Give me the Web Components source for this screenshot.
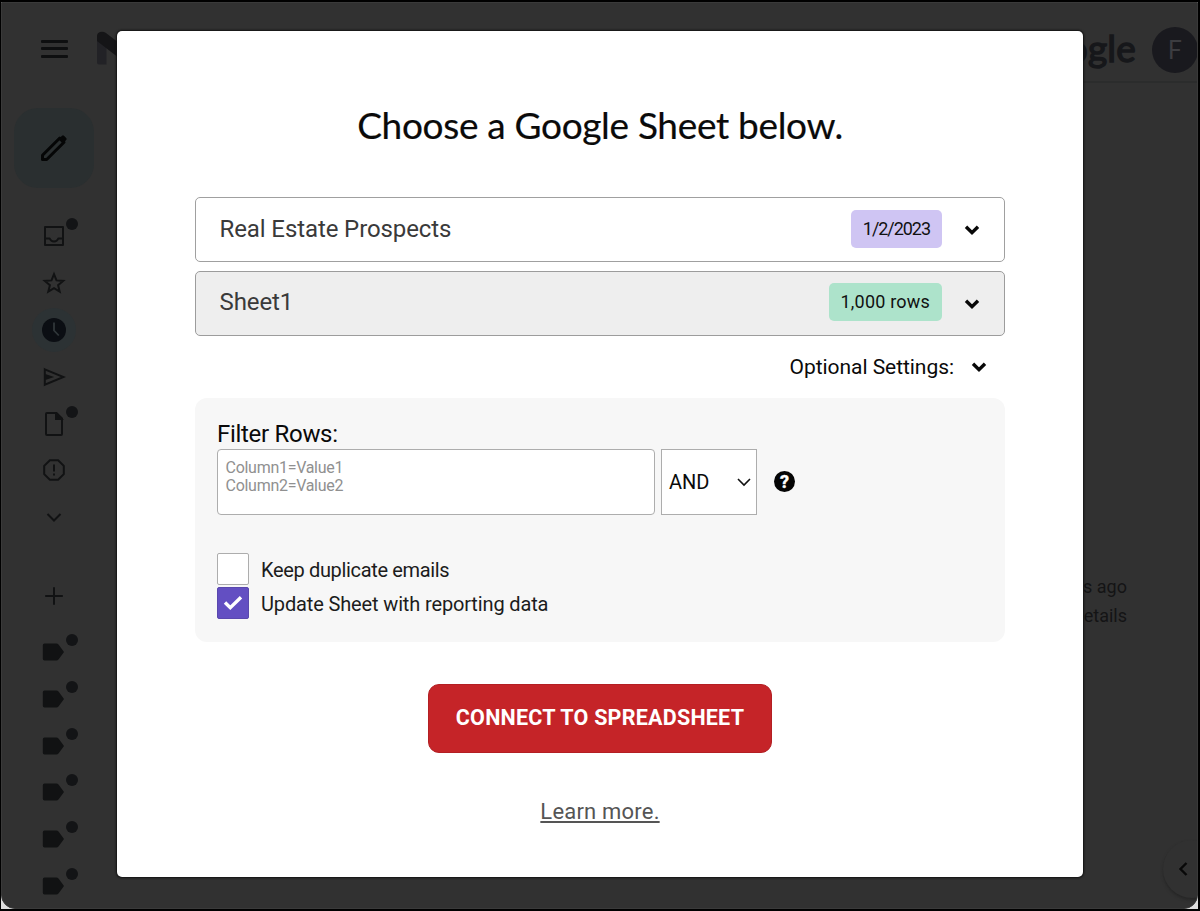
<!DOCTYPE html>
<html lang="en">
<head>
<meta charset="utf-8">
<title>Choose a Google Sheet</title>
<style>
  html, body {
    margin: 0;
    height: 100%;
    background: #000;
    overflow: hidden;
    font-family: Roboto, "Liberation Sans", sans-serif;
  }
</style>
</head>
<body>
<mail-window>
  <nav-rail slot="rail"></nav-rail>
  <mail-header slot="header" initial="F"></mail-header>
  <activity-note slot="note"></activity-note>
  <sheet-dialog slot="dialog">
    <span slot="title">Choose a Google Sheet below.</span>
    <picker-row label="Real Estate Prospects" badge="1/2/2023" style="--badge: #cfc5f3; --track: -1.050px"></picker-row>
    <picker-row label="Sheet1" badge="1,000 rows" lowered style="--badge: #ade3cb; --row: #eee; --edge: #9c9c9c"></picker-row>
    <options-toggle>Optional Settings:</options-toggle>
    <filter-panel>
      <check-option style="--track: -0.340px">Keep duplicate emails</check-option>
      <check-option checked style="--track: -0.140px">Update Sheet with reporting data</check-option>
    </filter-panel>
    <connect-button slot="actions">CONNECT TO SPREADSHEET</connect-button>
    <learn-link slot="actions">Learn more.</learn-link>
  </sheet-dialog>
</mail-window>

<script>
// Small base class: render() returns the shadow markup
class BaseElement extends HTMLElement {
  constructor() {
    super();
    this.attachShadow({ mode: 'open' });
  }

  connectedCallback() {
    this.shadowRoot.innerHTML = this.render();
  }
}

const ICONS = {
  inbox: `<path d="M3 3h18v18H3zM3.5 14.5h4.2c.8 2 2.200 3 4.300 3s3.500-1 4.300-3h4.200" stroke-linejoin="round"/>`,
  star: `<path d="M12 3.200l2.500 6.200 6.700.5-5.100 4.300 1.600 6.500-5.700-3.500-5.700 3.500 1.600-6.500-5.100-4.300 6.700-.5z"/>`,
  clock: `<circle cx="12" cy="12" r="12" fill="currentColor" stroke="none"/><path d="M12 4.500v8l4.800 5" stroke="#30373a" stroke-width="1.800"/>`,
  send: `<path d="M2.800 4.300L21.500 12 2.800 19.700zM3 12h6M3 10l6 2-6 2"/>`,
  file: `<path d="M5 1h9.500l5.500 5.500V22q0 1-1 1H5q-1 0-1-1V2q0-1 1-1z"/><path d="M14 1.500V7h5.500z" fill="currentColor"/>`,
  spam: `<path d="M7.900 2.200h8.200l5.700 5.700v8.200l-5.700 5.700H7.900l-5.700-5.700V7.900z"/><path d="M12 6.500v7M12 15.500v2"/>`,
  more: `<path d="M5.500 9l6.500 6.500L18.500 9"/>`,
  plus: `<path d="M12 3.200v17.600M3.200 12h17.600"/>`,
  label: `<path d="M2.500 3.500h11.800q1.500 0 2.400 1.200L22 12l-5.300 7.300q-.9 1.200-2.400 1.200H2.500q-1.700 0-1.700-1.700V5.200q0-1.700 1.700-1.700z" fill="currentColor" stroke="none"/>`
};

class RailItem extends BaseElement {
  render() {
    const icon = this.getAttribute('icon');
    return `
      <style>
        :host {
          display: flex;
          flex: none;
          height: 46.900px;
          align-items: center;
          justify-content: center;
          color: #111213;
        }
        .box {
          position: relative;
          display: flex;
          align-items: center;
          justify-content: center;
          width: 24px;
          height: 24px;
        }
        :host([active]) .box {
          color: #0b0e13;
          border-radius: 50%;
          box-shadow: 0 0 0 10px #2c3234;
          background: #2c3234;
        }
        svg { width: 24px; height: 24px; flex: none; }
        .dot {
          position: absolute;
          left: 23.500px;
          top: -6px;
          width: 12px;
          height: 12px;
          border-radius: 50%;
          background: #131416;
        }
      </style>
      <div class="box">
        <svg viewBox="0 0 24 24" fill="none" stroke="currentColor" stroke-width="2">${ICONS[icon]}</svg>
        ${this.hasAttribute('dot') ? '<span class="dot"></span>' : ''}
      </div>
    `;
  }
}

class NavRail extends BaseElement {
  render() {
    const labels = Array.from({ length: 6 }, () => '<rail-item icon="label" dot></rail-item>').join('');
    return `
      <style>
        :host {
          display: flex;
          flex-direction: column;
          width: 106px;
          margin-left: -1px;
        }
        .menu {
          display: flex;
          flex: none;
          flex-direction: column;
          justify-content: space-between;
          height: 17.500px;
          margin: 37px 39.500px 0;
          padding-bottom: 50.500px;
        }
        .menu i { height: 2.600px; border-radius: 1px; background: #0e0f10; }
        .compose {
          display: flex;
          flex: none;
          align-items: center;
          justify-content: center;
          width: 80px;
          height: 80px;
          margin: 0 13px;
          border-radius: 24px;
          background: #2a2f30;
        }
        .items { display: flex; flex: none; flex-direction: column; padding-top: 24.500px; }
        .gap { flex: none; height: 31.700px; }
        .gap.small { height: 9px; }
      </style>
      <div class="menu"><i></i><i></i><i></i></div>
      <div class="compose">
        <svg width="28" height="28" viewBox="0 0 28 28" fill="none" stroke="#050606">
          <path d="M2.500 25.500v-4.200L19.800 4l4.200 4.200L6.700 25.500z" stroke-width="3" stroke-linejoin="round"/>
          <path d="M18.500 5.300L22 1.800q1-1 2 0l2.200 2.200q1 1 0 2l-3.500 3.500z" fill="#050606" stroke="none"/>
        </svg>
      </div>
      <div class="items">
        <rail-item icon="inbox" dot></rail-item>
        <rail-item icon="star"></rail-item>
        <rail-item icon="clock" active></rail-item>
        <rail-item icon="send"></rail-item>
        <rail-item icon="file" dot></rail-item>
        <rail-item icon="spam"></rail-item>
        <rail-item icon="more"></rail-item>
        <div class="gap"></div>
        <rail-item icon="plus"></rail-item>
        <div class="gap small"></div>
        ${labels}
      </div>
    `;
  }
}

class MailHeader extends BaseElement {
  render() {
    return `
      <style>
        :host {
          display: flex;
          align-items: center;
          height: 94px;
          box-sizing: border-box;
        }
        .logo { flex: none; margin: -4px 0 0 1px; }
        .brand {
          margin: -4px 0 0 auto;
          font: 400 37px/46px Lato, sans-serif;
          letter-spacing: 0.200px;
          color: #16171a;
          -webkit-text-stroke: 1.400px #16171a;
        }
        .avatar {
          flex: none;
          width: 46px;
          height: 46px;
          margin: 0 -1px 0 16px;
          border-radius: 50%;
          background: #19191e;
          color: #3c3c40;
          font: 25px/48px Roboto, sans-serif;
          text-align: center;
        }
      </style>
      <svg class="logo" width="46" height="34" viewBox="0 0 46 34">
        <path d="M1 5h9.500v28.500H3q-2 0-2-2z" fill="#222226"/>
        <path d="M4 1q3-1 6 1l13 10L36 2q3-2 6-1t3 5v4L23 27 1 10V5q0-3 3-4z" fill="#151517"/>
      </svg>
      <div class="brand">Google</div>
      <div class="avatar">${this.getAttribute('initial')}</div>
    `;
  }
}

class ActivityNote extends BaseElement {
  render() {
    return `
      <style>
        :host {
          display: flex;
          flex-direction: column;
          align-items: flex-end;
          font-size: 18px;
          line-height: 29px;
          color: #141415;
        }
      </style>
      <span>s ago</span>
      <span>Details</span>
    `;
  }
}

class MailWindow extends BaseElement {
  render() {
    return `
      <style>
        :host {
          display: flex;
          box-sizing: border-box;
          height: 100vh;
          padding: 2px 2px 2px 1px;
          position: relative;
        }
        .paper { flex: 1; display: flex; min-width: 0; background: #ddd; }
        .surface {
          flex: 1;
          display: flex;
          min-width: 0;
          box-sizing: border-box;
          border: 1px solid #3a3a3a;
          border-radius: 0 0 14px 14px;
          background: #313131;
          overflow: hidden;
          position: relative;
        }
        .main {
          flex: 1;
          display: flex;
          flex-direction: column;
          min-width: 0;
          margin-left: -12px;
        }
        .view {
          flex: 1;
          margin: -16px 0 0 40px;
          border-top: 2px solid #2b2c2c;
          display: flex;
          justify-content: flex-end;
          padding: 489px 70px 0 0;
        }
        .expand {
          position: absolute;
          right: -24px;
          bottom: 10px;
          width: 58px;
          height: 58px;
          border-radius: 50%;
          box-shadow: 0 2px 3px #262626;
          display: flex;
          align-items: center;
          background: #313131;
        }
        .expand svg { margin-left: 15px; }
        ::slotted([slot="dialog"]) {
          position: absolute;
          left: 117px;
          top: 31px;
        }
      </style>
      <div class="paper">
        <div class="surface">
          <slot name="rail"></slot>
          <div class="main">
            <slot name="header"></slot>
            <div class="view"><slot name="note"></slot></div>
          </div>
          <div class="expand">
            <svg width="10" height="14" viewBox="0 0 10 14" fill="none" stroke="#080808" stroke-width="2.400"><path d="M8.500 1L2.500 7l6 6"/></svg>
          </div>
        </div>
      </div>
      <slot name="dialog"></slot>
    `;
  }
}

class SheetDialog extends BaseElement {
  render() {
    return `
      <style>
        :host {
          display: flex;
          flex-direction: column;
          box-sizing: border-box;
          width: 966px;
          height: 846px;
          padding: 69px 78px 0;
          border-radius: 5px;
          background: #fff;
          box-shadow: 0 0 2px 1px #111;
        }
        h1 {
          margin: 0 0 47px;
          font: 400 37px/50px Lato, sans-serif;
          letter-spacing: -0.320px;
          text-align: center;
          white-space: nowrap;
          color: #0a0a0a;
          -webkit-text-stroke: 0.200px #0a0a0a;
        }
        .rows { display: flex; flex-direction: column; gap: 9px; }
        .actions {
          display: flex;
          flex-direction: column;
          align-items: center;
          gap: 44px;
          padding-top: 42px;
        }
      </style>
      <h1><slot name="title"></slot></h1>
      <div class="rows"><slot></slot></div>
      <div class="actions"><slot name="actions"></slot></div>
    `;
  }
}

class ChevronIcon extends BaseElement {
  render() {
    return `
      <style>
        :host { display: block; width: 16px; height: 12px; }
        svg { display: block; }
      </style>
      <svg width="16" height="12" viewBox="0 0 16 12" fill="none" stroke="#080808" stroke-width="3.400"><path d="M2 2.700l6 5.900 6-5.900"/></svg>
    `;
  }
}

class PickerRow extends BaseElement {
  render() {
    return `
      <style>
        :host {
          display: flex;
          align-items: center;
          box-sizing: border-box;
          height: 65px;
          padding: 0 24px 0 23.500px;
          border: 1px solid var(--edge, #a0a0a0);
          border-radius: 5px;
          background: var(--row, #fff);
        }
        .label {
          flex: 1;
          font-size: 24px;
          letter-spacing: -0.100px;
          color: #3a3a3a;
        }
        .badge {
          padding: 0 12px;
          border-radius: 5px;
          background: var(--badge);
          font-size: 18px;
          line-height: 38px;
          letter-spacing: var(--track, 0.200px);
          color: #111;
          margin-right: 22px;
        }
        .label, .badge { margin-bottom: 1px; }
        :host([lowered]) .label,
        :host([lowered]) .badge { margin-bottom: 4px; }
      </style>
      <span class="label">${this.getAttribute('label')}</span>
      <span class="badge">${this.getAttribute('badge')}</span>
      <chevron-icon></chevron-icon>
    `;
  }
}

class OptionsToggle extends BaseElement {
  render() {
    return `
      <style>
        :host {
          display: flex;
          align-items: center;
          justify-content: flex-end;
          gap: 17px;
          height: 44px;
          padding-right: 18px;
          font-size: 21px;
          letter-spacing: -0.050px;
          color: #0a0a0a;
        }
      </style>
      <slot></slot>
      <chevron-icon></chevron-icon>
    `;
  }
}

class FilterPanel extends BaseElement {
  render() {
    return `
      <style>
        :host {
          display: block;
          box-sizing: border-box;
          height: 244px;
          padding: 22px 22px 0;
          border-radius: 12px;
          background: #f7f7f7;
        }
        .heading {
          font-size: 24px;
          line-height: 29px;
          letter-spacing: -0.300px;
          color: #0a0a0a;
        }
        .filter { display: flex; align-items: center; }
        textarea {
          box-sizing: border-box;
          width: 438px;
          height: 66px;
          padding: 9px 7.500px 7px;
          border: 1px solid #adadad;
          border-radius: 4px;
          background: #fff;
          font: 16px/18px Roboto, sans-serif;
          letter-spacing: -0.280px;
          resize: none;
        }
        textarea::placeholder { color: #909090; opacity: 1; }
        .join {
          display: flex;
          align-items: center;
          justify-content: space-between;
          box-sizing: border-box;
          width: 96px;
          height: 66px;
          margin: 0 17px 0 6px;
          padding: 0 5px 0 7px;
          border: 1px solid #adadad;
          background: #fff;
          font-size: 20px;
          color: #0a0a0a;
        }
        .help {
          width: 21px;
          height: 21px;
          margin-bottom: 1px;
          border-radius: 50%;
          background: #050505;
          color: #fff;
          font: 700 18px/21px Roboto, sans-serif;
          text-align: center;
          -webkit-text-stroke: 0.500px #fff;
        }
        .checks {
          display: flex;
          flex-direction: column;
          gap: 2px;
          padding-top: 38px;
        }
      </style>
      <div class="heading">Filter Rows:</div>
      <div class="filter">
        <textarea placeholder="Column1=Value1&#10;Column2=Value2"></textarea>
        <div class="join">AND
          <svg width="14" height="9" viewBox="0 0 14 9" fill="none" stroke="#111" stroke-width="1.600"><path d="M1 1l6 6 6-6"/></svg>
        </div>
        <div class="help">?</div>
      </div>
      <div class="checks"><slot></slot></div>
    `;
  }
}

class CheckOption extends BaseElement {
  render() {
    const checked = this.hasAttribute('checked');
    return `
      <style>
        :host {
          display: flex;
          align-items: center;
          gap: 12px;
          height: 32px;
          font-size: 20px;
          letter-spacing: var(--track, 0);
          color: #1c1c1c;
        }
        .text { padding-top: 2px; }
        .box {
          display: flex;
          align-items: center;
          justify-content: center;
          box-sizing: border-box;
          width: 32px;
          height: 32px;
          border: 1px solid #adadad;
          border-radius: 2px;
          background: #fff;
        }
        :host([checked]) .box { background: #634fc2; border-color: #5a48ae; }
      </style>
      <span class="box">
        ${checked ? '<svg width="20" height="16" viewBox="0 0 20 16" fill="none" stroke="#fff" stroke-width="3.400"><path d="M2 7.500l5.300 5.200L18 2.200"/></svg>' : ''}
      </span>
      <span class="text"><slot></slot></span>
    `;
  }
}

class ConnectButton extends BaseElement {
  render() {
    return `
      <style>
        :host { display: block; }
        button {
          display: block;
          box-sizing: border-box;
          width: 344px;
          height: 69px;
          padding: 0 0 2px;
          border: 1px solid #b31f23;
          border-radius: 11px;
          background: #c52428;
          color: #fff;
          font: 700 21.500px Roboto, sans-serif;
          letter-spacing: 0.230px;
          white-space: nowrap;
        }
      </style>
      <button><slot></slot></button>
    `;
  }
}

class LearnLink extends BaseElement {
  render() {
    return `
      <style>
        :host { display: block; }
        a {
          font-size: 22px;
          line-height: 30px;
          letter-spacing: 0.200px;
          color: #555;
          text-decoration: underline;
          text-decoration-thickness: 2px;
          text-underline-offset: 2px;
          text-decoration-skip-ink: none;
        }
      </style>
      <a><slot></slot></a>
    `;
  }
}

customElements.define('rail-item', RailItem);
customElements.define('nav-rail', NavRail);
customElements.define('mail-header', MailHeader);
customElements.define('activity-note', ActivityNote);
customElements.define('chevron-icon', ChevronIcon);
customElements.define('picker-row', PickerRow);
customElements.define('options-toggle', OptionsToggle);
customElements.define('check-option', CheckOption);
customElements.define('filter-panel', FilterPanel);
customElements.define('connect-button', ConnectButton);
customElements.define('learn-link', LearnLink);
customElements.define('sheet-dialog', SheetDialog);
customElements.define('mail-window', MailWindow);
</script>
</body>
</html>
